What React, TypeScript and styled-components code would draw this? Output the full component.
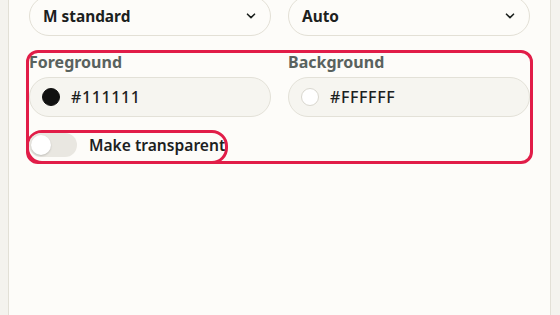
import React from "react";
import styled, { createGlobalStyle } from "styled-components";

const GlobalStyle = createGlobalStyle`
  html, body { margin: 0; padding: 0; }
  body {
    background: #f4f3ee;
    font-family: "Noto Sans", "Liberation Sans", sans-serif;
    color: #1e2320;
  }
`;

const Shell = styled.div`
  display: flex;
  height: 315px;
  width: 560px;
  padding-left: 8px;
  box-sizing: border-box;
  overflow: hidden;
`;

const Panel = styled.div`
  width: 543px;
  box-sizing: border-box;
  background: #fdfcf9;
  border-left: 1px solid #e2e0d6;
  border-right: 1px solid #e2e0d6;
  padding: 0 20px;
  display: flex;
  flex-direction: column;
  gap: 16.5px;
`;

const TopRow = styled.div`
  display: grid;
  grid-template-columns: 242px 242px;
  column-gap: 17px;
  margin-top: -4px;
`;

const Select = styled.div`
  height: 40px;
  box-sizing: border-box;
  border: 1px solid #e3e0d6;
  border-radius: 20px;
  background: #fdfcf9;
  padding: 0 14px 0 13px;
  display: flex;
  align-items: center;
  justify-content: space-between;
  font-size: 15.4px;
  font-weight: 700;
  color: #1c211e;
`;

const Chevron = () => (
  <svg width="10" height="6" viewBox="0 0 10 6" fill="none">
    <path d="M1.5 1.2 L5 4.6 L8.5 1.2" stroke="#1c211e" strokeWidth="1.6" strokeLinecap="round" strokeLinejoin="round" />
  </svg>
);

const Group = styled.div`
  display: grid;
  grid-template-columns: 242px 242px;
  column-gap: 17px;
  row-gap: 16px;
  outline: 3px solid #e11d48;
  border-radius: 9px;
`;

const Field = styled.div`
  display: flex;
  flex-direction: column;
  gap: 6px;
`;

const Label = styled.div`
  font-size: 16px;
  line-height: 18px;
  font-weight: 700;
  color: #59625e;
`;

const ColorInput = styled.div`
  height: 40px;
  box-sizing: border-box;
  border: 1px solid #e3e1d8;
  border-radius: 20px;
  background: #f6f5f0;
  display: flex;
  align-items: center;
  gap: 11px;
  padding-left: 12px;
  font-size: 16px;
  font-weight: 500;
  color: #1c211e;
  letter-spacing: 0.6px;
`;

const Swatch = styled.span<{ $color: string }>`
  width: 18px;
  height: 18px;
  border-radius: 50%;
  box-sizing: border-box;
  background: ${(p) => p.$color};
  border: 1px solid ${(p) => (p.$color === "#FFFFFF" ? "#d9d7cf" : p.$color)};
  flex: none;
`;

const ToggleRow = styled.label`
  grid-column: 1 / -1;
  justify-self: start;
  display: flex;
  align-items: center;
  gap: 12px;
  padding-bottom: 4px;
  outline: 3px solid #e11d48;
  border-radius: 13px;
  font-size: 15.6px;
  font-weight: 600;
  color: #1c211e;
`;

const Track = styled.span`
  width: 48px;
  height: 24px;
  border-radius: 12px;
  background: #e9e7e1;
  position: relative;
  flex: none;
`;

const Knob = styled.span`
  position: absolute;
  left: 2px;
  top: 2px;
  width: 20px;
  height: 20px;
  border-radius: 50%;
  background: #ffffff;
  box-shadow: 0 1px 2px rgba(0, 0, 0, 0.18);
`;

export default function App() {
  return (
    <>
      <GlobalStyle />
      <Shell>
        <Panel>
          <TopRow>
            <Select>
              <span>M standard</span>
              <Chevron />
            </Select>
            <Select>
              <span>Auto</span>
              <Chevron />
            </Select>
          </TopRow>
          <Group>
            <Field>
              <Label>Foreground</Label>
              <ColorInput>
                <Swatch $color="#111111" />
                <span>#111111</span>
              </ColorInput>
            </Field>
            <Field>
              <Label>Background</Label>
              <ColorInput>
                <Swatch $color="#FFFFFF" />
                <span>#FFFFFF</span>
              </ColorInput>
            </Field>
            <ToggleRow>
              <Track>
                <Knob />
              </Track>
              <span>Make transparent</span>
            </ToggleRow>
          </Group>
        </Panel>
      </Shell>
    </>
  );
}
